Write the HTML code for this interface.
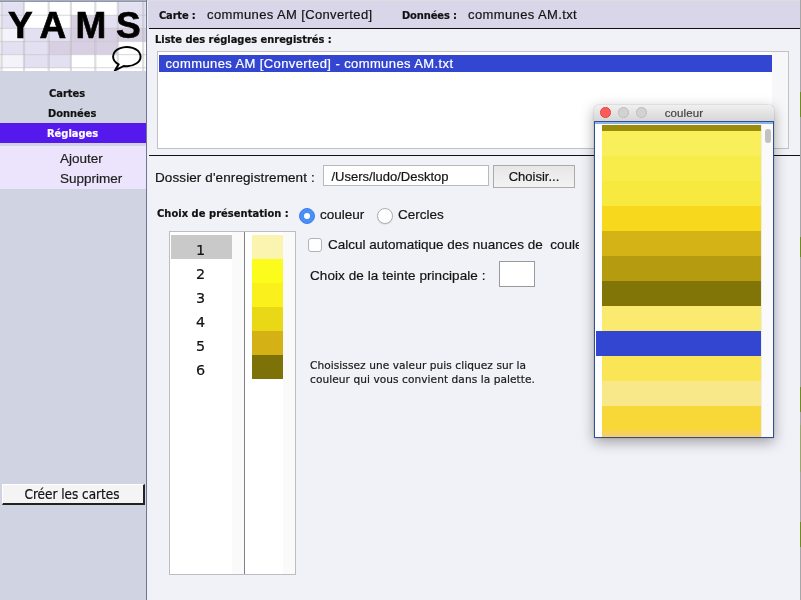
<!DOCTYPE html>
<html lang="fr"><head><meta charset="utf-8"><title>YAMS</title>
<style>
*{box-sizing:border-box;margin:0;padding:0}
html,body{width:801px;height:600px;overflow:hidden;background:#f1f1f8}
body{position:relative;font-family:"Liberation Sans",sans-serif;font-size:13px;color:#141414;-webkit-text-stroke-width:.2px}
.abs{position:absolute;white-space:nowrap;will-change:transform}
.dj{font-family:"DejaVu Sans",sans-serif}
#side{left:0;top:0;width:146px;height:600px;background:#d0d4e2}
#sideb{left:146px;top:0;width:2px;height:600px;background:#ededf2;border-left:1px solid #6f7795}
#logo{left:0;top:0;width:146px;height:71px;background:#fff;overflow:hidden}
#hdr{left:148px;top:0;width:653px;height:28px;background:#d9d6ea}
.hl{background:#111;height:1.3px}
.lbl{font-stretch:condensed;font-size:11px;font-weight:bold;font-family:"DejaVu Sans Condensed","DejaVu Sans",sans-serif;color:#111}
.menu{font-stretch:condensed;left:0;width:146px;padding-left:48px;font-family:"DejaVu Sans Condensed","DejaVu Sans",sans-serif;font-weight:bold;font-size:11px;color:#111;height:20px;line-height:20px}
.sub{left:60px;font-size:13.5px;color:#222}
.num{left:169.500px;width:61px;height:24px;line-height:31px;text-align:center;font-size:14.4px;color:#111}
.radio{width:16px;height:16px;border-radius:50%}
</style></head><body>
<div class="abs" id="side"></div>
<div class="abs" id="sideb"></div>
<div class="abs" id="logo">
<svg width="146" height="71">
<rect width="146" height="71" fill="#fff"/>
<rect x="1.5" y="2.2" width="22.5" height="13.100000000000001" fill="#e3e1f1"/><rect x="24" y="2.2" width="24.700000000000003" height="13.100000000000001" fill="#ffffff"/><rect x="48.7" y="2.2" width="22.200000000000003" height="13.100000000000001" fill="#ffffff"/><rect x="70.9" y="2.2" width="24.39999999999999" height="13.100000000000001" fill="#ffffff"/><rect x="95.3" y="2.2" width="22.5" height="13.100000000000001" fill="#ffffff"/><rect x="117.8" y="2.2" width="28.200000000000003" height="13.100000000000001" fill="#e3e1f1"/><rect x="1.5" y="15.3" width="22.5" height="13.099999999999998" fill="#e3e1f1"/><rect x="24" y="15.3" width="24.700000000000003" height="13.099999999999998" fill="#ffffff"/><rect x="48.7" y="15.3" width="22.200000000000003" height="13.099999999999998" fill="#ffffff"/><rect x="70.9" y="15.3" width="24.39999999999999" height="13.099999999999998" fill="#d9cfe3"/><rect x="95.3" y="15.3" width="22.5" height="13.099999999999998" fill="#e3e1f1"/><rect x="117.8" y="15.3" width="28.200000000000003" height="13.099999999999998" fill="#e3e1f1"/><rect x="1.5" y="28.4" width="22.5" height="13.100000000000001" fill="#f3f3f9"/><rect x="24" y="28.4" width="24.700000000000003" height="13.100000000000001" fill="#e3e1f1"/><rect x="48.7" y="28.4" width="22.200000000000003" height="13.100000000000001" fill="#e3e1f1"/><rect x="70.9" y="28.4" width="24.39999999999999" height="13.100000000000001" fill="#d9cfe3"/><rect x="95.3" y="28.4" width="22.5" height="13.100000000000001" fill="#d9cfe3"/><rect x="117.8" y="28.4" width="28.200000000000003" height="13.100000000000001" fill="#d9cfe3"/><rect x="1.5" y="41.5" width="22.5" height="13.100000000000001" fill="#e3e1f1"/><rect x="24" y="41.5" width="24.700000000000003" height="13.100000000000001" fill="#e3e1f1"/><rect x="48.7" y="41.5" width="22.200000000000003" height="13.100000000000001" fill="#d9cfe3"/><rect x="70.9" y="41.5" width="24.39999999999999" height="13.100000000000001" fill="#d9cfe3"/><rect x="95.3" y="41.5" width="22.5" height="13.100000000000001" fill="#d9cfe3"/><rect x="117.8" y="41.5" width="28.200000000000003" height="13.100000000000001" fill="#ffffff"/><rect x="1.5" y="54.6" width="22.5" height="13.100000000000001" fill="#f3f3f9"/><rect x="24" y="54.6" width="24.700000000000003" height="13.100000000000001" fill="#e3e1f1"/><rect x="48.7" y="54.6" width="22.200000000000003" height="13.100000000000001" fill="#e3e1f1"/><rect x="70.9" y="54.6" width="24.39999999999999" height="13.100000000000001" fill="#ffffff"/><rect x="95.3" y="54.6" width="22.5" height="13.100000000000001" fill="#ffffff"/><rect x="117.8" y="54.6" width="28.200000000000003" height="13.100000000000001" fill="#ffffff"/>
<rect x="0.3999999999999999" y="0" width="2.2" height="71" fill="#b4b4bc" opacity=".44"/><rect x="22.9" y="0" width="2.2" height="71" fill="#b4b4bc" opacity=".44"/><rect x="47.6" y="0" width="2.2" height="71" fill="#b4b4bc" opacity=".44"/><rect x="69.80000000000001" y="0" width="2.2" height="71" fill="#b4b4bc" opacity=".44"/><rect x="94.2" y="0" width="2.2" height="71" fill="#b4b4bc" opacity=".44"/><rect x="116.7" y="0" width="2.2" height="71" fill="#b4b4bc" opacity=".44"/><rect x="142.1" y="0" width="2.2" height="71" fill="#b4b4bc" opacity=".44"/><rect x="0" y="14.700000000000001" width="146" height="1.2" fill="#b4b4bc" opacity=".44"/><rect x="0" y="27.799999999999997" width="146" height="1.2" fill="#b4b4bc" opacity=".44"/><rect x="0" y="40.9" width="146" height="1.2" fill="#b4b4bc" opacity=".44"/><rect x="0" y="54.0" width="146" height="1.2" fill="#b4b4bc" opacity=".44"/><rect x="0" y="67.10000000000001" width="146" height="1.2" fill="#b4b4bc" opacity=".44"/>
<rect x="0" y="0" width="146" height="1.7" fill="#d4d4da"/><rect x="0" y="0.600" width="146" height="1.1" fill="#6f7592"/>
<text x="8 39.5 75.5 116" y="38" font-family="Liberation Sans, sans-serif" font-weight="bold" font-size="37" fill="#000" stroke="#000" stroke-width=".7">YAMS</text>
<path d="M118.6 64.3A13.7 9.6 0 1 1 123.9 66L115 70.4Z" fill="none" stroke="#000" stroke-width="1.9" stroke-linejoin="miter"/>
</svg>
</div>
<div class="abs" id="hdr"></div>
<div class="abs" style="left:147px;top:0;width:654px;height:1px;background:#dedee2"></div>
<div class="abs hl" style="left:149px;top:28px;width:652px;height:1px"></div>
<div class="abs lbl" style="left:158.500px;top:9px;letter-spacing:-.15px">Carte :</div>
<div class="abs" style="left:206.700px;top:7px;letter-spacing:.38px">communes AM [Converted]</div>
<div class="abs lbl" style="left:401.500px;top:9px;letter-spacing:-.1px">Données :</div>
<div class="abs" style="left:467.600px;top:7px;letter-spacing:.38px">communes AM.txt</div>

<div class="abs menu" style="top:84px;padding-left:49px">Cartes</div>
<div class="abs menu" style="top:104px">Données</div>
<div class="abs menu" style="top:123px;background:#5519ee;color:#fff;padding-left:47px;line-height:22px">Réglages</div>
<div class="abs" style="left:0;top:146px;width:146px;height:43px;background:#ece4fd"></div>
<div class="abs sub" style="top:151px">Ajouter</div>
<div class="abs sub" style="top:171px">Supprimer</div>
<div class="abs" style="font-stretch:condensed;font-family:'DejaVu Sans Condensed','DejaVu Sans',sans-serif;left:2px;top:484px;width:143px;height:21px;background:#f4f4f4;border-top:1px solid #fff;border-left:1px solid #fff;border-right:2px solid #222;border-bottom:2px solid #222;text-align:center;padding-right:2px;font-size:13.4px;line-height:20px;color:#111">Créer les cartes</div>

<div class="abs lbl" style="left:155px;top:33px">Liste des réglages enregistrés :</div>
<div class="abs" style="left:157px;top:51px;width:632px;height:98px;background:#f7f7f9;border:1px solid #c2c2c6"></div>
<div class="abs" style="left:158px;top:52px;width:614px;height:96px;background:#fff"></div>
<div class="abs" style="left:159px;top:55px;width:613px;height:17px;background:#3346d1;color:#fff;padding-left:6.400px;line-height:17px;letter-spacing:.4px">communes AM [Converted] - communes AM.txt</div>
<div class="abs hl" style="left:149px;top:154.800px;width:652px;height:1.4px"></div>

<div class="abs" style="left:154.500px;top:170px;font-size:13.5px;letter-spacing:.1px">Dossier d'enregistrement :</div>
<div class="abs" style="left:323px;top:165px;width:166px;height:21px;background:#fff;border:1px solid #b9b9bd;padding-left:7.500px;line-height:22px">/Users/ludo/Desktop</div>
<div class="abs" style="left:493px;top:165px;width:82px;height:23px;background:linear-gradient(#e7e7e7,#f3f3f3);border:1px solid #ababab;text-align:center;line-height:22px">Choisir...</div>
<div class="abs lbl" style="left:156.500px;top:207px;letter-spacing:.05px">Choix de présentation :</div>
<div class="abs radio" style="left:299px;top:208px;background:#4a8ef7;border:1px solid #3f7fe8"></div>
<div class="abs" style="left:304px;top:213px;width:6px;height:6px;border-radius:50%;background:#fff"></div>
<div class="abs" style="left:320px;top:207px;font-size:13.5px">couleur</div>
<div class="abs radio" style="left:377px;top:208px;background:#fff;border:1px solid #b0b0b4;box-shadow:0 .5px 1px rgba(0,0,0,.15)"></div>
<div class="abs" style="left:398px;top:207px;font-size:13.5px">Cercles</div>

<div class="abs" style="left:169px;top:231px;width:127px;height:344px;background:#fafafa;border:1px solid #bdbdc2"></div>
<div class="abs" style="left:170px;top:232px;width:62px;height:342px;background:#fff"></div>
<div class="abs" style="left:171px;top:235px;width:61px;height:24px;background:#c9c9c9"></div>
<div class="abs dj num" style="top:235px">1</div><div class="abs dj num" style="top:259px">2</div><div class="abs dj num" style="top:283px">3</div><div class="abs dj num" style="top:307px">4</div><div class="abs dj num" style="top:331px">5</div><div class="abs dj num" style="top:355px">6</div>
<div class="abs" style="left:244px;top:232px;width:1px;height:342px;background:#808084"></div>
<div class="abs" style="left:245px;top:232px;width:38px;height:342px;background:#fff"></div>
<div class="abs" style="left:252px;top:235.0px;width:31px;height:24px;background:#fbf3b0"></div><div class="abs" style="left:252px;top:258.9px;width:31px;height:24px;background:#fbfc1c"></div><div class="abs" style="left:252px;top:282.8px;width:31px;height:24px;background:#faf01c"></div><div class="abs" style="left:252px;top:306.7px;width:31px;height:24px;background:#e9d815"></div><div class="abs" style="left:252px;top:330.6px;width:31px;height:24px;background:#d4b216"></div><div class="abs" style="left:252px;top:354.5px;width:31px;height:24px;background:#7d7208"></div>
<div class="abs" style="left:308px;top:238px;width:14px;height:14px;background:#fff;border:1px solid #b2b2b6;border-radius:3px"></div>
<div class="abs" style="left:328px;top:237px;width:251px;overflow:hidden;font-size:13.5px;white-space:pre">Calcul automatique des nuances de  couleurs</div>
<div class="abs" style="left:310px;top:268px;font-size:13.5px;letter-spacing:.07px">Choix de la teinte principale :</div>
<div class="abs" style="left:499px;top:261px;width:36px;height:26px;background:#fff;border:1px solid #9a9a9e"></div>
<div class="abs dj" style="left:310px;top:358px;font-size:10.6px;letter-spacing:.06px;line-height:14px;color:#1a1a1a;white-space:pre">Choisissez une valeur puis cliquez sur la
couleur qui vous convient dans la palette.</div>

<div class="abs" style="left:594px;top:105px;width:180px;height:333px;box-shadow:0 4px 14px rgba(0,0,0,.35),0 0 1px rgba(0,0,0,.5);border-radius:5px 5px 0 0;background:#fff"></div>
<div class="abs" style="left:594px;top:105px;width:180px;height:16.500px;border-radius:5px 5px 0 0;background:linear-gradient(#f0f0f0,#d5d5d5);text-align:center;font-size:11.5px;letter-spacing:.12px;line-height:16.500px;color:#444">couleur</div>
<div class="abs" style="left:599.5px;top:107.300px;width:10.500px;height:10.500px;border-radius:50%;background:#fc5b57;border:.5px solid #df4744"></div>
<div class="abs" style="left:617.5px;top:107.300px;width:10.500px;height:10.500px;border-radius:50%;background:#d2d2d2;border:.5px solid #bcbcbc"></div>
<div class="abs" style="left:635.5px;top:107.300px;width:10.500px;height:10.500px;border-radius:50%;background:#d2d2d2;border:.5px solid #bcbcbc"></div>
<div class="abs" style="left:594px;top:121px;width:180px;height:317px;background:#fff;border:1.5px solid #2f4f8f;border-top:1px solid #2f4f8f;box-shadow:inset 0 2px 0 #8db4ea"></div>
<div class="abs" style="left:761px;top:124px;width:11.5px;height:313px;background:#fafafa;border-left:1px solid #ececec"></div>
<div class="abs" style="left:764.5px;top:128.500px;width:5.500px;height:14px;border-radius:3px;background:#c1c1c1"></div>
<div class="abs" style="left:602px;top:124.8px;width:159px;height:6.200000000000003px;background:#9a8c08"></div><div class="abs" style="left:602px;top:131px;width:159px;height:25px;background:#f9ef5b"></div><div class="abs" style="left:602px;top:156px;width:159px;height:25px;background:#f8ec4a"></div><div class="abs" style="left:602px;top:181px;width:159px;height:25px;background:#f7e93e"></div><div class="abs" style="left:602px;top:206px;width:159px;height:25px;background:#f7d81c"></div><div class="abs" style="left:602px;top:231px;width:159px;height:25px;background:#d3b316"></div><div class="abs" style="left:602px;top:256px;width:159px;height:25px;background:#b59b10"></div><div class="abs" style="left:602px;top:281px;width:159px;height:25px;background:#817508"></div><div class="abs" style="left:602px;top:306px;width:159px;height:25px;background:#faeb70"></div><div class="abs" style="left:596px;top:331px;width:165px;height:25px;background:#3346d1"></div><div class="abs" style="left:602px;top:356px;width:159px;height:25px;background:#f9e555"></div><div class="abs" style="left:602px;top:381px;width:159px;height:25px;background:#f9e88a"></div><div class="abs" style="left:602px;top:406px;width:159px;height:25px;background:#f8d738"></div><div class="abs" style="left:602px;top:431px;width:159px;height:6px;background:#f7d060"></div>
<div class="abs" style="left:800px;top:0;width:1px;height:600px;background:linear-gradient(#a6a6a6 0 92px,#6e8c1c 92px 117px,#a6a6a6 117px 237px,#6e8c1c 237px 257px,#a6a6a6 257px 387px,#6e8c1c 387px 412px,#a6a6a6 412px 425px,#98a86a 425px 472px,#a6a6a6 472px 522px,#6e8c1c 522px 547px,#a6a6a6 547px)"></div>
</body></html>
